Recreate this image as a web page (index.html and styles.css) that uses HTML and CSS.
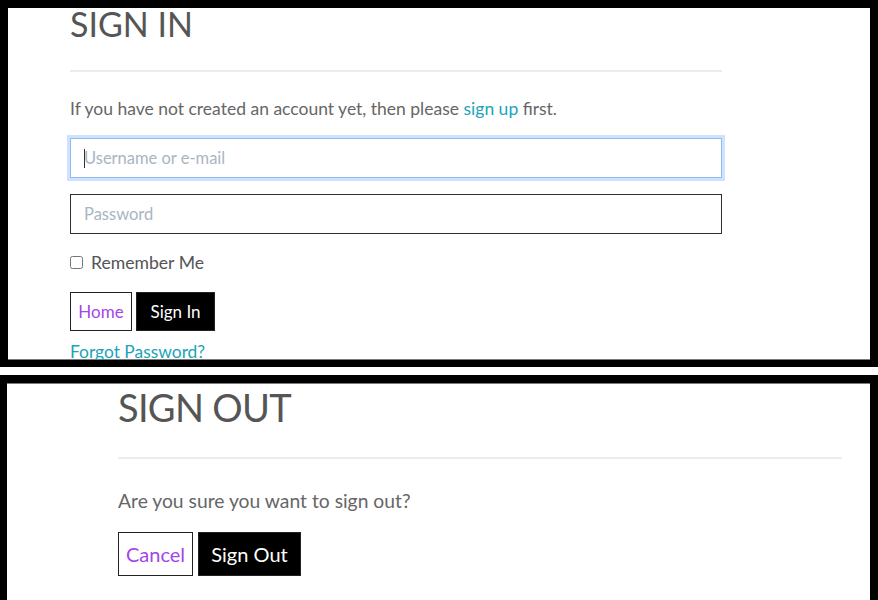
FILE: index.html
```html
<!DOCTYPE html>
<html lang="en">
<head>
<meta charset="utf-8">
<title>Sign in / Sign out</title>
<link rel="stylesheet" href="styles.css">
</head>
<body>
<section class="panel panel-in">
  <div class="content content-in">
    <h1 class="title title-in">SIGN IN</h1>
    <hr class="rule">
    <p class="lead lead-in">If you have not created an account yet, then please <a class="link" href="#">sign up</a> first.</p>
    <form class="form">
      <div class="field">
        <input class="input input-focus" type="text" placeholder="Username or e-mail">
        <span class="caret"></span>
      </div>
      <input class="input" type="password" placeholder="Password">
      <label class="remember"><input class="check" type="checkbox"><span>Remember Me</span></label>
      <div class="actions">
        <a class="btn btn-outline btn-home" href="#">Home</a>
        <button class="btn btn-solid btn-signin" type="button">Sign In</button>
      </div>
      <a class="link forgot" href="#">Forgot Password?</a>
    </form>
  </div>
</section>
<section class="panel panel-out">
  <div class="content content-out">
    <h1 class="title title-out">SIGN OUT</h1>
    <hr class="rule">
    <p class="lead lead-out">Are you sure you want to sign out?</p>
    <div class="actions actions-out">
      <a class="btn btn-outline btn-cancel" href="#">Cancel</a>
      <button class="btn btn-solid btn-signout" type="button">Sign Out</button>
    </div>
  </div>
</section>
</body>
</html>
```
FILE: styles.css
```css
html, body {
  margin: 0;
  padding: 0;
  background: #ffffff;
}
body {
  width: 878px;
  height: 600px;
  overflow: hidden;
  font-family: Lato, "Open Sans", "Liberation Sans", sans-serif;
  color: #555555;
}
.panel {
  box-sizing: border-box;
  border: 8px solid #000000;
  background: #ffffff;
  overflow: hidden;
}
.panel-in {
  height: 367px;
  border-bottom-width: 7px;
}
.panel-out {
  margin-top: 8px;
  height: 225px;
  border-left-width: 7px;
  border-bottom: none;
}
.content {
  box-sizing: border-box;
  height: 100%;
  width: 100%;
}
.content-in {
  padding-left: 62px;
  box-shadow: inset 0 -1px 0 #7a7a7a;
}
.content-in > * {
  width: 652px;
}
.content-out {
  padding-left: 111px;
  box-shadow: inset 0 1px 0 #7a7a7a;
}
.content-out > .rule {
  width: 724px;
}
.title {
  margin: 0;
  font-weight: 400;
  color: #555555;
}
.title-in {
  font-size: 34px;
  line-height: 32px;
}
.title-out {
  font-size: 38px;
  line-height: 40px;
  letter-spacing: -0.7px;
  padding-top: 4px;
}
.rule {
  margin: 30px 0 0 0;
  border: none;
  height: 2px;
  background: #ececec;
}
.lead {
  margin: 0;
  color: #666666;
}
.lead-in {
  margin-top: 25px;
  font-size: 17.5px;
  line-height: 24px;
}
.lead-out {
  margin-top: 29px;
  font-size: 19.3px;
  line-height: 26px;
}
.link {
  color: #1aa4b9;
  text-decoration: none;
}
.form {
  display: flex;
  flex-direction: column;
  margin-top: 17px;
}
.field {
  position: relative;
}
.input {
  box-sizing: border-box;
  display: block;
  width: 652px;
  height: 40px;
  margin: 0;
  padding: 0 13px;
  border: 1px solid #2e2e2e;
  border-radius: 0;
  background: #ffffff;
  font-family: Lato, "Open Sans", "Liberation Sans", sans-serif;
  font-size: 16.5px;
  color: #444444;
  outline: none;
}
.input::placeholder {
  color: #a9b5c3;
}
.field + .input {
  margin-top: 16px;
}
.input-focus {
  border-color: #8fbdf3;
  box-shadow: 0 0 0 3px #cfe2fd;
}
.caret {
  position: absolute;
  left: 14px;
  top: 11px;
  width: 1px;
  height: 19px;
  background: #333333;
}
.remember {
  display: flex;
  align-items: center;
  height: 24px;
  margin-top: 16px;
  font-size: 17.6px;
  color: #555555;
}
.check {
  width: 13px;
  height: 13px;
  margin: 0 8px 0 0;
}
.actions {
  display: flex;
  gap: 4px;
  margin-top: 18px;
}
.btn {
  box-sizing: border-box;
  display: inline-flex;
  align-items: center;
  justify-content: center;
  margin: 0;
  border: 1px solid #222222;
  border-radius: 0;
  font-family: Lato, "Open Sans", "Liberation Sans", sans-serif;
  text-decoration: none;
  cursor: pointer;
}
.btn-outline {
  background: #ffffff;
  color: #a445e8;
}
.btn-solid {
  background: #000000;
  color: #ffffff;
}
.btn-home, .btn-signin {
  height: 39px;
  font-size: 17px;
}
.btn-home { width: 62px; }
.btn-signin { width: 79px; }
.forgot {
  margin-top: 9px;
  font-size: 17.4px;
  line-height: 24px;
  align-self: flex-start;
  width: auto;
}
.actions-out {
  margin-top: 18px;
  gap: 5px;
}
.btn-cancel, .btn-signout {
  height: 44px;
  font-size: 20px;
}
.btn-cancel { width: 75px; }
.btn-signout { width: 103px; }
```
